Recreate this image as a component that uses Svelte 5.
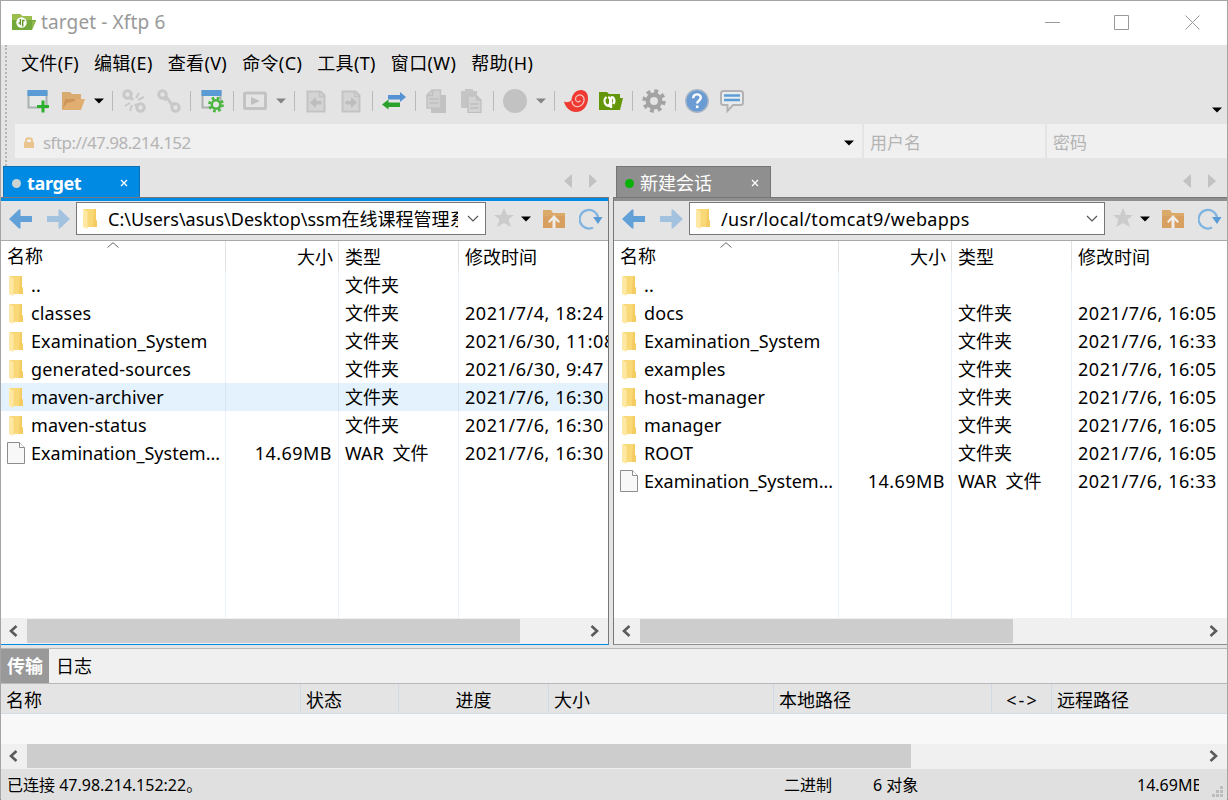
<script lang="ts">
  type Entry = {
    name: string;
    size: string;
    kind: string;
    time: string;
    hot?: boolean;
  };
  type Pane = {
    side: "local" | "remote";
    title: string;
    path: string;
    entries: Entry[];
  };

  const folder = "文件夹";

  const menus: string[] = ["文件(F)", "编辑(E)", "查看(V)", "命令(C)", "工具(T)", "窗口(W)", "帮助(H)"];

  const tools: string[] = [
    "new", "open", "caret", "sep",
    "unlink", "link", "sep",
    "props", "sep",
    "play", "caret dim", "sep",
    "left", "right", "sep",
    "sync", "sep",
    "copy", "paste", "sep",
    "disc", "caret dim", "sep",
    "shell", "xftp", "sep",
    "gear", "sep",
    "help", "chat",
  ];

  const panes: Pane[] = [
    {
      side: "local",
      title: "target",
      path: "C:\\Users\\asus\\Desktop\\ssm在线课程管理系",
      entries: [
        { name: "..", size: "", kind: folder, time: "" },
        { name: "classes", size: "", kind: folder, time: "2021/7/4, 18:24" },
        { name: "Examination_System", size: "", kind: folder, time: "2021/6/30, 11:08" },
        { name: "generated-sources", size: "", kind: folder, time: "2021/6/30, 9:47" },
        { name: "maven-archiver", size: "", kind: folder, time: "2021/7/6, 16:30", hot: true },
        { name: "maven-status", size: "", kind: folder, time: "2021/7/6, 16:30" },
        { name: "Examination_System...", size: "14.69MB", kind: "WAR 文件", time: "2021/7/6, 16:30" },
      ],
    },
    {
      side: "remote",
      title: "新建会话",
      path: "/usr/local/tomcat9/webapps",
      entries: [
        { name: "..", size: "", kind: "", time: "" },
        { name: "docs", size: "", kind: folder, time: "2021/7/6, 16:05" },
        { name: "Examination_System", size: "", kind: folder, time: "2021/7/6, 16:33" },
        { name: "examples", size: "", kind: folder, time: "2021/7/6, 16:05" },
        { name: "host-manager", size: "", kind: folder, time: "2021/7/6, 16:05" },
        { name: "manager", size: "", kind: folder, time: "2021/7/6, 16:05" },
        { name: "ROOT", size: "", kind: folder, time: "2021/7/6, 16:05" },
        { name: "Examination_System...", size: "14.69MB", kind: "WAR 文件", time: "2021/7/6, 16:33" },
      ],
    },
  ];
</script>

{#snippet caret()}
  <svg class="caret" viewBox="0 0 10 6"><path d="M0 .5h10L5 5.5z" fill="currentColor" /></svg>
{/snippet}

{#snippet folderIcon()}
  <svg class="folder" width="16" height="22" viewBox="0 0 16 22">
    <path d="M2 1h12v11l1 1v6H5z" fill="#f9d877" />
    <path d="M12 1h2v11l1 1v6h-4z" fill="#f4cc62" />
    <path d="M1 1l4.500 2.500V21L1 19z" fill="#ffe8a3" />
  </svg>
{/snippet}

{#snippet chevron(dir: string)}
  <svg class="chev {dir}" width="10" height="12" viewBox="0 0 10 12">
    <path d={dir === "left" ? "M8.500 1L3 6l5.500 5" : "M1.500 1L7 6l-5.500 5"} fill="none" stroke="#5b5b5b" stroke-width="2.600" />
  </svg>
{/snippet}

{#snippet toolIcon(name: string)}
  <svg class="tool" width="24" height="24" viewBox="0 0 24 24">
    {#if name === "new" || name === "props"}
      <path d="M2.500 2.500h18v16h-18z" fill="#e6e8e8" stroke="#aab0b0" stroke-width="2" />
      <path d="M1.500 1h20v6h-20z" fill="#5b9bd5" />
      {#if name === "new"}
        <path d="M11 16h4.500v-4.500h3V16H23v3h-4.500v4.500h-3V19H11z" fill="#2db02d" />
      {:else}
        <circle cx="16" cy="15.500" r="6.400" fill="none" stroke="#4bb540" stroke-width="3" stroke-dasharray="2.600 2.426" />
        <circle cx="16" cy="15.500" r="4.200" fill="#e6e8e8" stroke="#4bb540" stroke-width="2.400" />
      {/if}
    {:else if name === "open"}
      <path d="M1 3h8l2 2h9v16H1z" fill="#d9ab70" />
      <path d="M4 10h20l-4 11H1z" fill="#dfae70" />
      <path d="M4 10h10v2l-8 2-4 5z" fill="#ce9458" />
    {:else if name === "link" || name === "unlink"}
      <g fill="none" stroke="#c8c8c8" stroke-width="3">
        <circle cx="5.500" cy="5.500" r="3.700" />
        <circle cx="18.500" cy="18.500" r="3.700" />
        {#if name === "link"}
          <path d="M7 11l3-2 5 7 3-2" stroke-width="3" />
        {:else}
          <path d="M14 9l3-5M16 11l6-3M8 14l-5 3M10 16l-2 6" stroke-width="2" />
          <path d="M8 8l3 3M13 15l2 2" />
        {/if}
      </g>
    {:else if name === "play"}
      <rect x="1.500" y="4" width="21" height="15.500" rx="1" fill="none" stroke="#c3c3c3" stroke-width="3" />
      <path d="M8 8l9 4-9 4z" fill="#c0c0c0" />
    {:else if name === "left" || name === "right"}
      <path d="M3.500 2.500h13l4 4v16h-17z" fill="#d4d4d4" stroke="#c3c3c3" stroke-width="2" />
      <path d="M15.500 2v5.500H21" fill="none" stroke="#c3c3c3" stroke-width="1.500" />
      <path
        d={name === "left" ? "M6 13.500l6-5.500v4h5.500v3.500H12V19z" : "M18 13.500L12 8v4H6.500v3.500H12V19z"}
        fill="#bdbdbd"
      />
    {:else if name === "sync"}
      <path d="M6 6h12V3l6 5-6 5v-2.500H6z" fill="#5592d3" />
      <path d="M18 13.500H6.500v-3l-6.500 5 6.500 5V18H18z" fill="#2aa12a" />
    {:else if name === "copy"}
      <path d="M9 6h12v18H6v-5z" fill="#c2c2c2" />
      <path d="M2 6l5-5h8.500v18H2z" fill="#d0d0d0" stroke="#c2c2c2" stroke-width="1.500" />
      <path d="M7.500 1v5.500H2M4.500 10h9M4.500 14h9" fill="none" stroke="#bfbfbf" stroke-width="1.500" />
    {:else if name === "paste"}
      <path d="M1 2h4V0h8v2h4v17H1z" fill="#c5c5c5" />
      <path d="M8 7h9l4 4v12.500H8z" fill="#d2d2d2" stroke="#bfbfbf" stroke-width="1.200" />
      <path d="M17 7v4h4M10.500 15h8M10.500 19h8" fill="none" stroke="#bfbfbf" stroke-width="1.500" />
    {:else if name === "disc"}
      <circle cx="12" cy="12" r="12" fill="#c2c2c2" />
    {:else if name === "shell"}
      <path
        d="M0 12.500c3 1.500 6 .5 7.500-1.500C8 5 12 1 17 1c5 0 7 4 7 8 0 8-5 14-12 14C6 23 1.500 18.500 0 12.500z"
        fill="#ef3a32"
      />
      <path
        d="M8 12c0 5 4.500 6.500 8 5 4.500-2 5.500-8 2-10.500-3-1.500-6.500.500-6.500 3.500 0 2.800 3.500 4 5 1.500"
        fill="none"
        stroke="#f3c6c3"
        stroke-width="1.200"
      />
    {:else if name === "xftp"}
      <path d="M0 3h8l2 2h11v4h3l-3 12H0z" fill="#64960a" />
      <path d="M10 7.500v9.500a5 5 0 0 1-2.500-9" fill="none" stroke="#fff" stroke-width="2" />
      <path d="M10 9.500v5q-2 1-3-1.500T10 9.500z" fill="#64960a" />
      <path d="M12 19V10q0-2.500 2-1.500 2.500 2.500.5 6.500" fill="none" stroke="#fff" stroke-width="2.400" />
    {:else if name === "gear"}
      <circle cx="12" cy="12" r="9.700" fill="none" stroke="#a3a3a3" stroke-width="4" stroke-dasharray="3.800 3.818" />
      <circle cx="12" cy="12" r="6.200" fill="none" stroke="#a3a3a3" stroke-width="4.500" />
    {:else if name === "help"}
      <circle cx="12" cy="12" r="11.200" fill="#6a9cd3" stroke="#a9b6c4" stroke-width="1.400" />
      <path d="M8.200 9.200c0-5 7.600-5 7.600-.6 0 3-3.600 2.800-3.600 6" fill="none" stroke="#fff" stroke-width="2.400" />
      <path d="M10.900 16.500h2.600v2.600h-2.600z" fill="#fff" />
    {:else if name === "chat"}
      <path d="M3.500 2h17q2.500 0 2.500 2.500v9q0 2.500-2.500 2.500H13l-5.500 6v-6h-4Q1 16 1 13.500v-9Q1 2 3.500 2z" fill="#e8ecee" stroke="#b3b3b3" stroke-width="2" />
      <path d="M4 6.500h16M4 11h16" stroke="#5e9cd6" stroke-width="2.400" />
    {/if}
  </svg>
{/snippet}

{#snippet arrow(dir: string)}
  <svg class="nav {dir}" width="24" height="20" viewBox="0 0 24 20">
    <path d={dir === "back" ? "M0 10L10 .5h1.500V7H23v6H11.500v6.500H10z" : "M23 10L13 .5h-1.500V7H0v6h11.500v6.500H13z"} fill="currentColor" />
  </svg>
{/snippet}

<div class="window">
  <header class="titlebar">
    <svg class="logo" width="24" height="24" viewBox="0 0 24 24">
      <path d="M0 3h8l2 2h10v4h4l-4 10H0z" fill="#73a83a" />
      <path d="M0 3h8l2 2h10v4H0z" fill="#9abd4e" />
      <path d="M20 10h4l-4 8z" fill="#8fb84a" />
      <circle cx="9.500" cy="11.500" r="5.200" fill="#fff" />
      <path d="M8.400 8v6M6.500 12h2M10.700 15.500v-6h2" fill="none" stroke="#639a2c" stroke-width="1.400" />
    </svg>
    <h1>target - Xftp 6</h1>
    <svg class="controls" width="156" height="16" viewBox="0 0 156 16" fill="none" stroke="#999">
      <path d="M0 7.500h15M69.500.5h14v14h-14z" />
      <path d="M140.500.5l14 14M154.500.5l-14 14" />
    </svg>
  </header>

  <div class="bars">
    <nav class="menubar">
      {#each menus as menu}
        <span>{menu}</span>
      {/each}
    </nav>
    <div class="toolbar">
      {#each tools as tool}
        {#if tool === "sep"}
          <i class="sep"></i>
        {:else if tool.startsWith("caret")}
          <span class="drop" class:dim={tool.endsWith("dim")}>{@render caret()}</span>
        {:else}
          {@render toolIcon(tool)}
        {/if}
      {/each}
      <span class="more">{@render caret()}</span>
    </div>
    <div class="address">
      <div class="field host">
        <svg width="12" height="12" viewBox="0 0 12 12">
          <path d="M3 6V3.500Q3 1.200 6 1.200T9 3.500V6" fill="none" stroke="#e9c48d" stroke-width="2" />
          <path d="M1 5h10v6H1z" fill="#e9c48d" />
        </svg>
        <span>sftp://47.98.214.152</span>
        {@render caret()}
      </div>
      <div class="field user">用户名</div>
      <div class="field pass">密码</div>
    </div>
  </div>

  <main>
    {#each panes as pane}
      <section class="pane {pane.side}">
        <div class="tabs">
          <div class="tab">
            <i class="dot"></i>
            <span>{pane.title}</span>
            <svg width="8" height="8" viewBox="0 0 8 8"><path d="M1 1l6 6M7 1L1 7" stroke="#fff" stroke-width="1.300" /></svg>
          </div>
          <svg class="scroll" width="33" height="14" viewBox="0 0 33 14">
            <path d="M8 0v14L0 7zM25 0v14l8-7z" fill="#c2c2c2" />
          </svg>
        </div>
        <div class="body">
          <div class="pathbar">
            {@render arrow("back")}
            {@render arrow("next")}
            <div class="path">
              {@render folderIcon()}
              <span>{pane.path}</span>
              <svg width="12" height="8" viewBox="0 0 12 8"><path d="M1 1l5 5 5-5" fill="none" stroke="#555" stroke-width="1.200" /></svg>
            </div>
            <svg class="star" width="20" height="20" viewBox="0 0 20 20">
              <path d="M10 0l3 7h7l-5.500 4.500L17 19l-7-4-7 4 2.500-7.500L0 7h7z" fill="#cbcbcb" />
            </svg>
            {@render caret()}
            <svg class="up" width="22" height="20" viewBox="0 0 22 20">
              <path d="M0 1h8l2 3h12v15H0z" fill="#dba968" />
              <path d="M0 7h22v12H0z" fill="#d8a060" />
              <path d="M11 6l6 6.500-1.500 1.500-3-3V19h-3v-8l-3 3L5 12.500z" fill="#f0ece8" />
            </svg>
            <svg class="reload" width="24" height="22" viewBox="0 0 24 22">
              <path d="M14 19.600A9.300 9.300 0 1 1 19 9" fill="none" stroke="#7fb4e0" stroke-width="2.200" />
              <path d="M14 9h9.500l-4.500 7z" fill="#5b9bd5" />
            </svg>
          </div>
          <div class="list">
            <div class="row head">
              <div class="name">
                名称
                <svg class="sort" width="12" height="6" viewBox="0 0 12 6"><path d="M.5 5.500L6 .7l5.500 4.800" fill="none" stroke="#666" /></svg>
              </div>
              <div class="size">大小</div>
              <div class="kind">类型</div>
              <div class="time">修改时间</div>
            </div>
            {#each pane.entries as entry}
              <div class="row" class:hot={entry.hot}>
                <div class="name">
                  {#if entry.size}
                    <svg class="file" width="18" height="22" viewBox="0 0 18 22">
                      <path d="M.5.500h12l5 5v16H.5z" fill="#f8f8f8" stroke="#8d8d8d" />
                      <path d="M12.500.5v5h5" fill="#fff" stroke="#8d8d8d" />
                    </svg>
                  {:else}
                    {@render folderIcon()}
                  {/if}
                  <span>{entry.name}</span>
                </div>
                <div class="size">{entry.size}</div>
                <div class="kind">{entry.kind}</div>
                <div class="time">{entry.time}</div>
              </div>
            {/each}
            <div class="row rest">
              <div class="name"></div>
              <div class="size"></div>
              <div class="kind"></div>
              <div class="time"></div>
            </div>
          </div>
          <div class="scrollbar">
            {@render chevron("left")}
            <i class="thumb"></i>
            {@render chevron("right")}
          </div>
        </div>
      </section>
    {/each}
  </main>

  <section class="transfer">
    <div class="switch">
      <b>传输</b>
      <span>日志</span>
    </div>
    <div class="columns">
      <div>名称</div>
      <div>状态</div>
      <div class="mid">进度</div>
      <div>大小</div>
      <div>本地路径</div>
      <div class="mid way">&lt;-&gt;</div>
      <div>远程路径</div>
    </div>
    <div class="empty"></div>
    <div class="scrollbar">
      {@render chevron("left")}
      <i class="thumb"></i>
      {@render chevron("right")}
    </div>
  </section>

  <footer>
    <span class="state">已连接 47.98.214.152:22。</span>
    <span class="mode">二进制</span>
    <span class="count">6 对象</span>
    <span class="total">14.69MB</span>
    <svg class="grip" width="12" height="12" viewBox="0 0 12 12">
      <path d="M8 0h3v3H8zM4 4h3v3H4zM8 4h3v3H8zM0 8h3v3H0zM4 8h3v3H4zM8 8h3v3H8z" fill="#bdbdbd" />
    </svg>
  </footer>
</div>

<style>
  :global(body) {
    margin: 0;
    overflow: hidden;
  }
  .window {
    box-sizing: border-box;
    width: 1228px;
    height: 800px;
    display: flex;
    flex-direction: column;
    border: 1px solid #a5a5a5;
    border-bottom-color: #6b6b6b;
    background: #e4e4e4;
    color: #000;
    font: 18px/28px "Noto Sans", "Noto Sans CJK SC", sans-serif;
    white-space: nowrap;
  }
  .window * {
    box-sizing: border-box;
  }
  svg {
    display: block;
    flex: none;
  }
  .caret {
    width: 10px;
    height: 6px;
  }

  .titlebar {
    height: 44px;
    flex: none;
    display: flex;
    align-items: center;
    padding: 0 26px 1px 11px;
    background: #fff;
  }
  h1 {
    flex: 1;
    margin: 0 0 2px 5px;
    font-size: 19px;
    font-weight: 400;
    letter-spacing: 0.130px;
    color: #999;
  }

  .bars {
    height: 121px;
    flex: none;
    margin-left: 4px;
    border-left: 2px dotted #b5b5b5;
  }
  .menubar {
    height: 36px;
    display: flex;
    align-items: center;
    padding-left: 14px;
    gap: 15px;
    letter-spacing: 0.370px;
  }
  .toolbar {
    height: 40px;
    display: flex;
    align-items: center;
    padding-left: 19px;
  }
  .tool + :global(.tool) {
    margin-left: 11px;
  }
  .drop {
    margin-left: 9px;
  }
  .drop + .sep {
    margin-left: 8px;
  }
  .dim {
    color: #858585;
  }
  .sep {
    width: 1px;
    height: 20px;
    margin: 0 9px;
    background: #b9b9b9;
  }
  .more {
    margin: 17px 5px 0 auto;
  }
  .address {
    height: 34px;
    display: flex;
    gap: 2px;
    margin: 3px 0 0 8px;
    color: #b4b4b4;
    font-size: 17px;
  }
  .field {
    display: flex;
    align-items: center;
    padding-top: 3px;
    padding-left: 6px;
    background: #f0f0f0;
  }
  .host {
    width: 847px;
    padding: 3px 8px 0 8px;
  }
  .host span {
    flex: 1;
    padding-left: 8px;
    letter-spacing: -0.550px;
  }
  .host .caret {
    color: #000;
  }
  .user {
    width: 181px;
  }
  .pass {
    flex: 1;
  }

  main {
    height: 479px;
    flex: none;
    display: flex;
    gap: 4px;
  }
  .pane {
    --tint: #008ae3;
    width: 608px;
    display: flex;
    flex-direction: column;
  }
  .remote {
    --tint: #8f8f8f;
    width: 614px;
  }
  .tabs {
    height: 31px;
    display: flex;
    align-items: flex-start;
    justify-content: space-between;
    padding: 0 12px 0 2px;
  }
  .remote .tabs {
    padding: 0 11px 0 3px;
  }
  .tab {
    width: 137px;
    height: 31px;
    display: flex;
    align-items: center;
    padding: 2px 11px 0 8px;
    border: 1px solid #0e72b5;
    border-bottom: 0;
    background: var(--tint);
    color: #fff;
  }
  .local .tab {
    font-weight: 700;
    letter-spacing: -0.350px;
  }
  .remote .tab {
    width: 155px;
    border-color: #757575;
  }
  .tab span {
    flex: 1;
    padding-left: 6px;
  }
  .dot {
    width: 9px;
    height: 9px;
    border-radius: 50%;
    background: #ccd3d3;
  }
  .remote .dot {
    background: #08b108;
  }
  .scroll {
    margin-top: 8px;
  }
  .body {
    flex: 1;
    display: flex;
    flex-direction: column;
    border: 1px solid #777;
    border-width: 1px 1px 1px 0;
    border-bottom-color: var(--tint);
  }
  .remote .body {
    border-width: 1px 0 1px 1px;
  }
  .pathbar {
    height: 43px;
    flex: none;
    display: flex;
    align-items: center;
    padding: 0 5px 0 8px;
    border-top: 3px solid var(--tint);
    border-bottom: 1px solid #aaa;
  }
  .nav {
    color: #62a0d8;
    margin-right: 14px;
    margin-bottom: 4px;
  }
  .nav.next {
    color: #a3c2df;
    margin-right: 5px;
  }
  .path {
    flex: 1;
    min-width: 0;
    height: 33px;
    margin-bottom: 4px;
    display: flex;
    align-items: center;
    padding: 0 6px 0 5px;
    border: 1px solid #777;
    background: #fff;
  }
  .path span {
    flex: 1;
    overflow: hidden;
    margin: 0 9px 0 10px;
    line-height: 30px;
  }
  .remote .path span {
    letter-spacing: 0.380px;
  }
  .star {
    margin: 0 7px 5px 8px;
  }
  .pathbar > :global(.caret) {
    margin-bottom: 3px;
  }
  .up {
    margin: 0 14px 4px 12px;
  }
  .reload {
    margin-bottom: 3px;
  }

  .list {
    flex: 1;
    display: flex;
    flex-direction: column;
    background: #fff;
    overflow: hidden;
  }
  .row {
    height: 28px;
    flex: none;
    display: grid;
    grid-template-columns: 225px 113px 120px 1fr;
  }
  .row > div {
    min-width: 0;
    padding-left: 6px;
    border-right: 1px solid #e9f0f8;
    overflow: hidden;
  }
  .row > .time {
    border: 0;
    letter-spacing: 0.550px;
  }
  .row.head {
    height: 30px;
    line-height: 32px;
  }
  .head > div {
    border-color: #e2e2e2;
  }
  .head > .time {
    letter-spacing: 0;
  }
  .row.rest {
    flex: 1;
  }
  .row.hot {
    background: #e4f2fe;
  }
  .hot > div {
    border-color: #d5e5f5;
  }
  .row > .name {
    position: relative;
    display: flex;
    align-items: center;
  }
  .name > :global(.folder) {
    margin: 1px 7px 0 1px;
  }
  .name > :global(.folder + span) {
    letter-spacing: 0.100px;
  }
  .name > .file {
    margin: 0 6px 0 0;
  }
  .row > .size {
    padding-right: 6px;
    text-align: right;
    letter-spacing: 0.450px;
  }
  .head > .size {
    padding-right: 5px;
    letter-spacing: 0;
  }
  .kind {
    word-spacing: 4px;
  }
  .sort {
    position: absolute;
    left: 106px;
    top: 1px;
  }

  .scrollbar {
    height: 26px;
    flex: none;
    display: flex;
    align-items: center;
    padding: 0 8px 0 7px;
    background: #f0f0f0;
    border-bottom: 1px solid #f0f0f0;
  }
  .thumb {
    width: 493px;
    height: 24px;
    margin: 0 auto 0 9px;
    background: #cdcdcd;
  }
  .remote .thumb {
    width: 373px;
  }

  .transfer {
    flex: none;
    margin-top: 3px;
    border-top: 1px solid #b8b8b8;
  }
  .switch {
    height: 35px;
    display: flex;
    line-height: 35px;
    background: #f0f0f0;
    border-bottom: 1px solid #b8b8b8;
  }
  .switch b {
    width: 48px;
    padding-left: 6px;
    background: #999;
    color: #fff;
  }
  .switch span {
    padding-left: 7px;
  }
  .columns {
    height: 30px;
    display: grid;
    grid-template-columns: 300px 98px 150px 225px 218px 60px 1fr;
    line-height: 32px;
    border-bottom: 1px solid #d3dae4;
  }
  .columns div {
    height: 29px;
    padding-left: 5px;
    border-right: 1px solid #d0d9e6;
  }
  .columns div:last-child {
    border: 0;
  }
  .columns .mid {
    padding: 0;
    text-align: center;
  }
  .columns .way {
    padding-left: 2px;
    letter-spacing: 2px;
  }
  .empty {
    height: 30px;
    background: #f8f8f8;
  }
  .transfer .scrollbar {
    height: 25px;
  }
  .transfer .thumb {
    width: 884px;
  }

  footer {
    flex: 1;
    display: flex;
    font-size: 16px;
    line-height: 33px;
    padding-left: 6px;
    background: #e0e0e0;
  }
  .state {
    width: 777px;
  }
  .mode {
    width: 89px;
  }
  .count {
    width: 264px;
  }
  .total {
    width: 62px;
    overflow: hidden;
  }
  .grip {
    margin: 17px 0 0 13px;
  }
</style>
